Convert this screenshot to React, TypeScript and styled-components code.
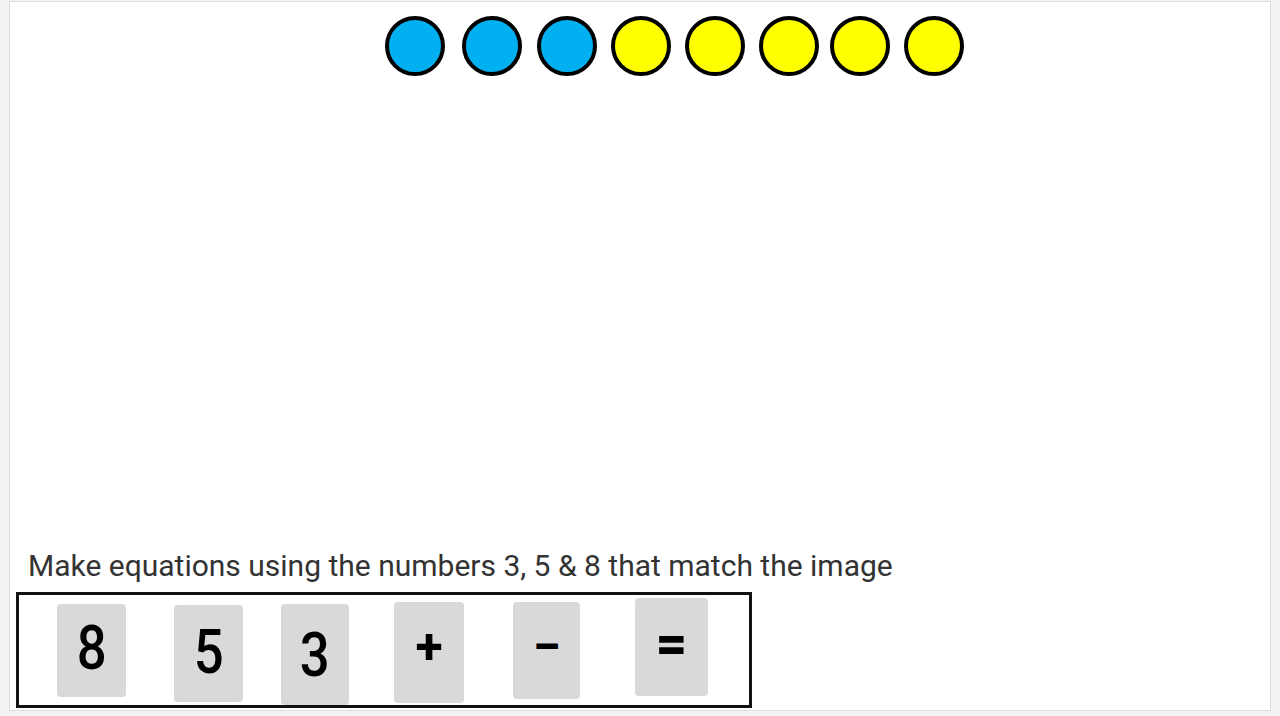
import React from "react";
import styled, { createGlobalStyle } from "styled-components";

const Global = createGlobalStyle`
  html, body {
    margin: 0;
    padding: 0;
    background: #f1f2f4;
    width: 1280px;
    height: 716px;
    overflow: hidden;
  }
`;

const Page = styled.div`
  width: 1280px;
  height: 716px;
  box-sizing: border-box;
  padding: 1px 0 0 9px;
  background: #f1f2f4;
`;

const Panel = styled.div`
  box-sizing: border-box;
  width: 1262px;
  height: 710px;
  background: #ffffff;
  border: 1px solid #dcdde1;
  display: flex;
  flex-direction: column;
`;

const CounterRow = styled.div`
  display: flex;
  padding: 14px 0 0 375px;
`;

const Counter = styled.div<{ $color: string; $gap: number }>`
  box-sizing: border-box;
  width: 60px;
  height: 60px;
  margin-left: ${(p) => p.$gap}px;
  border-radius: 50%;
  border: 4px solid #000;
  background: ${(p) => p.$color};
`;

const Bottom = styled.div`
  margin-top: auto;
  display: flex;
  flex-direction: column;
  padding-bottom: 2px;
`;

const Prompt = styled.div`
  font-family: Roboto, "Liberation Sans", sans-serif;
  font-size: 30px;
  line-height: 34px;
  color: #333333;
  padding-left: 18px;
  margin-bottom: 9px;
`;

const Tray = styled.div`
  box-sizing: border-box;
  margin-left: 6px;
  width: 736px;
  height: 116px;
  border: 3px solid #111;
  display: flex;
  align-items: flex-start;
  overflow: hidden;
`;

const Tile = styled.div<{ $left: number; $top: number; $w: number; $h: number }>`
  flex: none;
  box-sizing: border-box;
  margin-left: ${(p) => p.$left}px;
  margin-top: ${(p) => p.$top}px;
  width: ${(p) => p.$w}px;
  height: ${(p) => p.$h}px;
  background: #d9d9d9;
  border-radius: 4px;
  display: flex;
  align-items: center;
  justify-content: center;
`;

const Glyph = styled.span<{ $size: number; $dy: number; $weight: number; $sx: number }>`
  font-family: Roboto, "Liberation Sans", sans-serif;
  font-weight: ${(p) => p.$weight};
  font-size: ${(p) => p.$size}px;
  line-height: 1;
  color: #000;
  transform: translateY(${(p) => p.$dy}px) scaleX(${(p) => p.$sx});
`;

const counters = [
  { c: "#00b0f0", g: 0 },
  { c: "#00b0f0", g: 17 },
  { c: "#00b0f0", g: 15 },
  { c: "#ffff00", g: 14 },
  { c: "#ffff00", g: 14 },
  { c: "#ffff00", g: 14 },
  { c: "#ffff00", g: 11 },
  { c: "#ffff00", g: 14 },
];

const tiles = [
  { t: "8", left: 38, top: 9, w: 69, h: 93, size: 62, dy: -3, weight: 500, sx: 0.85 },
  { t: "5", left: 48, top: 10, w: 69, h: 97, size: 62, dy: -2, weight: 500, sx: 0.85 },
  { t: "3", left: 38, top: 9, w: 68, h: 101, size: 62, dy: 0, weight: 500, sx: 0.85 },
  { t: "+", left: 45, top: 7, w: 70, h: 101, size: 50, dy: -6, weight: 700, sx: 1 },
  { t: "\u2013", left: 49, top: 7, w: 67, h: 97, size: 50, dy: -4, weight: 700, sx: 0.85 },
  { t: "=", left: 55, top: 3, w: 73, h: 98, size: 54, dy: -4, weight: 900, sx: 1 },
];

export default function App() {
  return (
    <>
      <Global />
      <Page>
        <Panel>
          <CounterRow>
            {counters.map((c, i) => (
              <Counter key={i} $color={c.c} $gap={c.g} />
            ))}
          </CounterRow>
          <Bottom>
            <Prompt>Make equations using the numbers 3, 5 &amp; 8 that match the image</Prompt>
            <Tray>
              {tiles.map((tile, i) => (
                <Tile key={i} $left={tile.left} $top={tile.top} $w={tile.w} $h={tile.h}>
                  <Glyph $size={tile.size} $dy={tile.dy} $weight={tile.weight} $sx={tile.sx}>
                    {tile.t}
                  </Glyph>
                </Tile>
              ))}
            </Tray>
          </Bottom>
        </Panel>
      </Page>
    </>
  );
}
